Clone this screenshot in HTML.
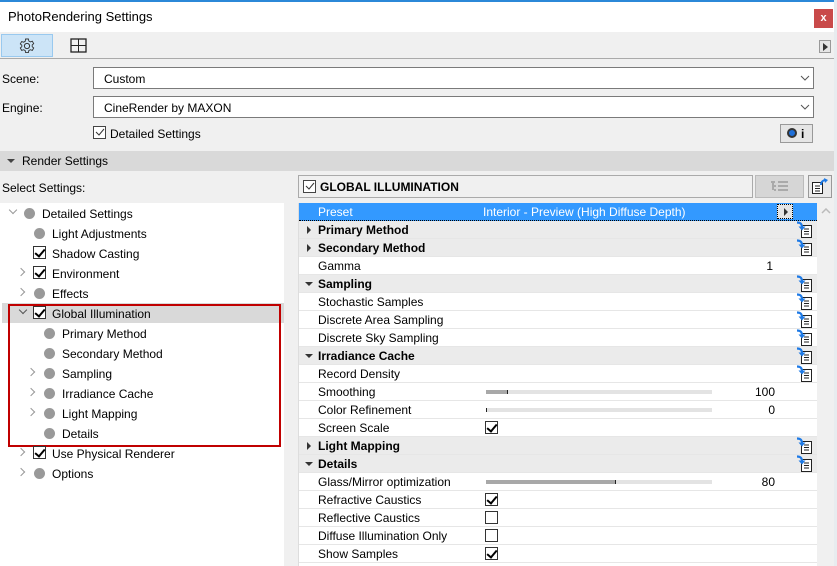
<!DOCTYPE html>
<html style="width:837px;height:566px;overflow:hidden"><head><meta charset="utf-8"><style>
*{box-sizing:border-box;margin:0;padding:0}
body{width:837px;height:566px;overflow:hidden;background:#f0f0f0;font-family:"Liberation Sans",sans-serif;font-size:12px;color:#000;position:relative}
.a{position:absolute}
.cb{position:absolute;width:13px;height:13px;border:1px solid #333;background:#fff}
.cb.c::after{content:"";position:absolute;left:3px;top:0px;width:4px;height:8px;border:solid #000;border-width:0 2px 2px 0;transform:rotate(40deg)}
.dot{position:absolute;width:11px;height:11px;border-radius:50%;background:#999}
.chev{position:absolute;width:6px;height:6px;border:solid #999;border-width:0 1.5px 1.5px 0}
.t{position:absolute;white-space:nowrap}
.row{position:absolute;left:299px;width:518px;height:18px;border-bottom:1px solid #e6e6e6;background:#fff}
.row.g{background:#ebebeb;font-weight:bold}
.row .l{position:absolute;left:19px;top:2px}
.tri{position:absolute;left:8px;top:5px;width:0;height:0;border-left:4px solid #333;border-top:4px solid transparent;border-bottom:4px solid transparent}
.trid{position:absolute;left:6px;top:7px;width:0;height:0;border-top:4px solid #333;border-left:4px solid transparent;border-right:4px solid transparent}
.sl{position:absolute;left:187px;top:7px;width:226px;height:4px;background:#e3e3e3}
.sl i{position:absolute;left:0;top:0;height:4px;background:#a8a8a8;border-right:1px solid #222}
.v{position:absolute;right:42px;top:2px;font-weight:normal}
.row .cb{left:186px;top:2px}
.ic{position:absolute;left:497px;top:0px}
</style></head><body>
<div class="a" style="left:0;top:0;width:837px;height:2px;background:#2b88d8"></div>
<div class="a" style="left:0;top:2px;width:834px;height:30px;background:#fff"></div>
<div class="t" style="left:8px;top:9px;font-size:13px">PhotoRendering Settings</div>
<div class="a" style="left:814px;top:9px;width:19px;height:19px;background:#c94a4a;color:#fff;font-size:11px;font-weight:bold;text-align:center;line-height:18px">x</div>
<div class="a" style="left:834px;top:0;width:3px;height:566px;background:#e8ecef"></div>
<div class="a" style="left:1px;top:34px;width:52px;height:23px;background:#cce4f7;border:1px solid #99c9ef"></div>
<svg class="a" style="left:18px;top:37px" width="18" height="18" viewBox="0 0 18 18"><circle cx="9" cy="9" r="2.6" fill="none" stroke="#333"/><path d="M7.6 2h2.8l.4 2 1.6.9 1.9-.7 1.4 2.4-1.5 1.3v1.8l1.5 1.3-1.4 2.4-1.9-.7-1.6.9-.4 2H7.6l-.4-2-1.6-.9-1.9.7-1.4-2.4 1.5-1.3V8.2L2.3 6.9l1.4-2.4 1.9.7 1.6-.9z" fill="none" stroke="#333" stroke-width="0.9"/></svg>
<svg class="a" style="left:70px;top:38px" width="18" height="16" viewBox="0 0 18 16"><rect x="1" y="1" width="15" height="13" fill="none" stroke="#222" stroke-width="1.3"/><path d="M8.5 1v13M1 7.5h15" stroke="#222"/></svg>
<div class="a" style="left:819px;top:40px;width:12px;height:13px;border:1px solid #999;background:#e5e5e5"></div>
<div class="a" style="left:823px;top:43px;border-left:5px solid #333;border-top:4px solid transparent;border-bottom:4px solid transparent"></div>
<div class="a" style="left:0;top:58px;width:834px;height:1px;background:#aaa"></div>
<div class="t" style="left:2px;top:72px">Scene:</div>
<div class="a" style="left:93px;top:67px;width:721px;height:22px;border:1px solid #7a7a7a;background:#fff"></div>
<div class="t" style="left:104px;top:72px">Custom</div>
<div class="t" style="left:2px;top:101px">Engine:</div>
<div class="a" style="left:93px;top:96px;width:721px;height:22px;border:1px solid #7a7a7a;background:#fff"></div>
<div class="t" style="left:104px;top:101px">CineRender by MAXON</div>
<svg class="a" style="left:800px;top:75px" width="10" height="6"><path d="M1 1l4 4 4-4" fill="none" stroke="#555"/></svg>
<svg class="a" style="left:800px;top:104px" width="10" height="6"><path d="M1 1l4 4 4-4" fill="none" stroke="#555"/></svg>
<div class="cb" style="left:93px;top:126px;border-color:#444;background:#fff"></div>
<svg class="a" style="left:95px;top:128px" width="10" height="9"><path d="M1 4l3 3 5-6" fill="none" stroke="#333"/></svg>
<div class="t" style="left:110px;top:127px">Detailed Settings</div>
<div class="a" style="left:780px;top:124px;width:33px;height:19px;border:1px solid #999;background:#e5e5e5"></div>
<div class="a" style="left:787px;top:128px;width:10px;height:10px;border-radius:50%;background:#1e6fd9;border:2px solid #333"></div>
<div class="t" style="left:801px;top:127px;font-weight:bold">i</div>
<div class="a" style="left:0;top:151px;width:834px;height:20px;background:#d9d9d9"></div>
<div class="a" style="left:7px;top:159px;border-top:4px solid #444;border-left:4px solid transparent;border-right:4px solid transparent"></div>
<div class="t" style="left:22px;top:154px">Render Settings</div>
<div class="t" style="left:2px;top:181px">Select Settings:</div>
<div class="a" style="left:0;top:203px;width:284px;height:363px;background:#fff"></div>
<div class="a" style="left:2px;top:303px;width:282px;height:20px;background:#d9d9d9"></div>
<div class="a" style="left:8px;top:304px;width:273px;height:143px;border:2.5px solid #c00000"></div>
<div class="chev" style="left:10px;top:207px;transform:rotate(45deg)"></div>
<div class="dot" style="left:24px;top:208px"></div><div class="t" style="left:42px;top:207px">Detailed Settings</div>
<div class="dot" style="left:34px;top:228px"></div><div class="t" style="left:52px;top:227px">Light Adjustments</div>
<div class="cb c" style="left:33px;top:246px"></div><div class="t" style="left:52px;top:247px">Shadow Casting</div>
<div class="chev" style="left:18px;top:269px;transform:rotate(-45deg)"></div>
<div class="cb c" style="left:33px;top:266px"></div><div class="t" style="left:52px;top:267px">Environment</div>
<div class="chev" style="left:18px;top:289px;transform:rotate(-45deg)"></div>
<div class="dot" style="left:34px;top:288px"></div><div class="t" style="left:52px;top:287px">Effects</div>
<div class="chev" style="left:20px;top:307px;transform:rotate(45deg);border-color:#555"></div>
<div class="cb c" style="left:33px;top:306px"></div><div class="t" style="left:52px;top:307px">Global Illumination</div>
<div class="dot" style="left:44px;top:328px"></div><div class="t" style="left:62px;top:327px">Primary Method</div>
<div class="dot" style="left:44px;top:348px"></div><div class="t" style="left:62px;top:347px">Secondary Method</div>
<div class="chev" style="left:28px;top:369px;transform:rotate(-45deg)"></div>
<div class="dot" style="left:44px;top:368px"></div><div class="t" style="left:62px;top:367px">Sampling</div>
<div class="chev" style="left:28px;top:389px;transform:rotate(-45deg)"></div>
<div class="dot" style="left:44px;top:388px"></div><div class="t" style="left:62px;top:387px">Irradiance Cache</div>
<div class="chev" style="left:28px;top:409px;transform:rotate(-45deg)"></div>
<div class="dot" style="left:44px;top:408px"></div><div class="t" style="left:62px;top:407px">Light Mapping</div>
<div class="dot" style="left:44px;top:428px"></div><div class="t" style="left:62px;top:427px">Details</div>
<div class="chev" style="left:18px;top:449px;transform:rotate(-45deg)"></div>
<div class="cb c" style="left:33px;top:446px"></div><div class="t" style="left:52px;top:447px">Use Physical Renderer</div>
<div class="chev" style="left:18px;top:469px;transform:rotate(-45deg)"></div>
<div class="dot" style="left:34px;top:468px"></div><div class="t" style="left:52px;top:467px">Options</div>
<div class="a" style="left:298px;top:175px;width:455px;height:23px;border:1px solid #aaa;background:#f0f0f0"></div>
<div class="cb" style="left:303px;top:180px;border-color:#444"></div>
<svg class="a" style="left:305px;top:182px" width="10" height="9"><path d="M1 4l3 3 5-6" fill="none" stroke="#333"/></svg>
<div class="t" style="left:320px;top:180px;font-weight:bold">GLOBAL ILLUMINATION</div>
<div class="a" style="left:755px;top:175px;width:49px;height:23px;border:1px solid #bbb;background:#d6d6d6"></div>
<svg class="a" style="left:771px;top:180px" width="18" height="13"><path d="M0 2h4M7 2h10M3 6h2M7 6h10M3 10h2M7 10h10M2 2v8" stroke="#aaa" stroke-width="2"/></svg>
<div class="a" style="left:808px;top:175px;width:24px;height:23px;border:1px solid #999;background:#e9e9e9"></div>
<svg class="a" style="left:811px;top:177px" width="18" height="18"><rect x="1.5" y="5.5" width="10" height="11" fill="#fff" stroke="#222"/><path d="M4 9h5M4 11.5h5M4 14h5" stroke="#222"/><path d="M10 8c0-4 3-5 5-5" fill="none" stroke="#1e7ae6" stroke-width="2"/><path d="M13 1l4 2-3 3z" fill="#1e7ae6"/></svg>
<div class="a" style="left:298px;top:203px;width:1px;height:363px;background:#ddd"></div>
<div class="a" style="left:818px;top:203px;width:16px;height:363px;background:#f0f0f0"></div>
<svg class="a" style="left:821px;top:208px" width="10" height="6"><path d="M1 5l4-4 4 4" fill="none" stroke="#bbb" stroke-width="1.5"/></svg>

<div class="row" style="top:203px;background:#3399ff;color:#fff;border-bottom:1px dotted #000"><span class="l">Preset</span><span class="t" style="left:184px;top:2px">Interior - Preview (High Diffuse Depth)</span>
<div class="a" style="left:478px;top:1px;width:16px;height:15px;background:#e5e5e5;border:1px dotted #000"></div><div class="a" style="left:485px;top:5px;border-left:4px solid #333;border-top:4px solid transparent;border-bottom:4px solid transparent"></div></div>
<div class="row g" style="top:221px"><div class="tri"></div><span class="l">Primary Method</span><svg class="ic" width="17" height="18"><use href="#ic"/></svg></div>
<div class="row g" style="top:239px"><div class="tri"></div><span class="l">Secondary Method</span><svg class="ic" width="17" height="18"><use href="#ic"/></svg></div>
<div class="row" style="top:257px"><span class="l">Gamma</span><span class="v" style="right:44px">1</span></div>
<div class="row g" style="top:275px"><div class="trid"></div><span class="l">Sampling</span><svg class="ic" width="17" height="18"><use href="#ic"/></svg></div>
<div class="row" style="top:293px"><span class="l">Stochastic Samples</span><svg class="ic" width="17" height="18"><use href="#ic"/></svg></div>
<div class="row" style="top:311px"><span class="l">Discrete Area Sampling</span><svg class="ic" width="17" height="18"><use href="#ic"/></svg></div>
<div class="row" style="top:329px"><span class="l">Discrete Sky Sampling</span><svg class="ic" width="17" height="18"><use href="#ic"/></svg></div>
<div class="row g" style="top:347px"><div class="trid"></div><span class="l">Irradiance Cache</span><svg class="ic" width="17" height="18"><use href="#ic"/></svg></div>
<div class="row" style="top:365px"><span class="l">Record Density</span><svg class="ic" width="17" height="18"><use href="#ic"/></svg></div>
<div class="row" style="top:383px"><span class="l">Smoothing</span><div class="sl"><i style="width:22px"></i></div><span class="v">100</span></div>
<div class="row" style="top:401px"><span class="l">Color Refinement</span><div class="sl"><i style="width:1px"></i></div><span class="v">0</span></div>
<div class="row" style="top:419px"><span class="l">Screen Scale</span><div class="cb c"></div></div>
<div class="row g" style="top:437px"><div class="tri"></div><span class="l">Light Mapping</span><svg class="ic" width="17" height="18"><use href="#ic"/></svg></div>
<div class="row g" style="top:455px"><div class="trid"></div><span class="l">Details</span><svg class="ic" width="17" height="18"><use href="#ic"/></svg></div>
<div class="row" style="top:473px"><span class="l">Glass/Mirror optimization</span><div class="sl"><i style="width:130px"></i></div><span class="v">80</span></div>
<div class="row" style="top:491px"><span class="l">Refractive Caustics</span><div class="cb c"></div></div>
<div class="row" style="top:509px"><span class="l">Reflective Caustics</span><div class="cb"></div></div>
<div class="row" style="top:527px"><span class="l">Diffuse Illumination Only</span><div class="cb"></div></div>
<div class="row" style="top:545px"><span class="l">Show Samples</span><div class="cb c"></div></div>
<div class="row" style="top:563px;height:3px;border:none"></div>
<svg width="0" height="0" style="position:absolute"><defs><g id="ic"><rect x="5.5" y="4.5" width="10" height="12" fill="#fff" stroke="#222"/><path d="M8 8h5M8 10.5h5M8 13h5" stroke="#222"/><path d="M1 1.5c4 0 5 2 5 5" fill="none" stroke="#1e7ae6" stroke-width="2.2"/><path d="M2.5 5.5l3.5 4 3.5-4z" fill="#1e7ae6"/></g></defs></svg>
</body></html>
